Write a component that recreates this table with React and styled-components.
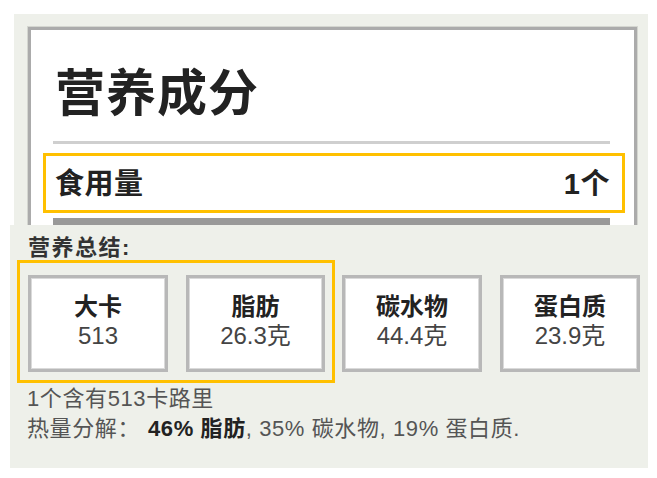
import React from 'react';
import styled, { createGlobalStyle } from 'styled-components';

const colors = {
  panel: '#eef0ea',
  ink: '#222',
  text: '#555',
  border: '#ababab',
  highlight: '#ffc000',
};

const font = `"Liberation Sans", "Noto Sans CJK SC", sans-serif`;

const Global = createGlobalStyle`
  html, body { margin: 0; padding: 0; background: #fff; }
  body { font-family: ${font}; }
`;

const Page = styled.div`
  width: 657px; height: 478px; box-sizing: border-box;
  padding-top: 14px;
  display: flex; flex-direction: column;
`;

const TopPanel = styled.section`
  margin-left: 14px; width: 634px; height: 211px; box-sizing: border-box;
  padding: 13px 11px 0 14px;
  background: ${colors.panel};
  overflow: hidden;
`;

const Label = styled.div`
  background: #fff;
  border: 3px solid ${colors.border};
  box-shadow: 0 0 0 1px #d4d6d0;
  height: 260px;
  padding: 35px 24px 0 22px;
`;

const Title = styled.h1`
  margin: 0 0 0 2px;
  font-size: 50px; line-height: 58px; font-weight: 700;
  color: ${colors.ink};
  letter-spacing: 1px;
`;

const Rule = styled.div`
  height: ${p => p.h || 2}px;
  background: ${p => p.color || '#cfcfcf'};
  margin-top: ${p => p.mt || 0}px;
`;

const Highlight = styled.div`
  border: 3px solid ${colors.highlight};
  box-sizing: border-box;
`;

const ServingRow = styled(Highlight)`
  margin: 9px -15px 0 -10px;
  height: 60px;
  padding: 0 12px 5px 9px;
  display: flex; align-items: center; justify-content: space-between;
  font-size: 29px; font-weight: 700; color: ${colors.ink};
  letter-spacing: 0.5px;
`;

const BottomPanel = styled.section`
  margin-left: 10px; width: 638px; height: 243px; box-sizing: border-box;
  padding: 11px 8px 0 18px;
  background: ${colors.panel};
`;

const Heading = styled.div`
  font-size: 22px; line-height: 24px; font-weight: 700; color: #333;
  letter-spacing: 1.5px;
`;

const CardRow = styled.div`
  display: flex; align-items: flex-start; gap: 7px;
  margin-left: -1px;
`;

const CardGroup = styled(Highlight)`
  display: flex; gap: 18px;
  padding: 12px 7px 8px 8px;
  margin-left: -10px;
`;

const Card = styled.div`
  width: ${p => p.w || 140}px; height: 97px; box-sizing: border-box;
  margin-top: ${p => p.mt || 0}px;
  margin-left: ${p => p.ml || 0}px;
  background: #fff;
  border: 3px solid #b8b8b8;
  box-shadow: inset 0 0 0 1px #dadada;
  display: flex; flex-direction: column; align-items: center;
  padding-top: 14px;
`;

const CardLabel = styled.div`
  font-size: 24px; line-height: 29px; font-weight: 700; color: ${colors.ink};
`;

const CardValue = styled.div`
  font-size: 24px; line-height: 30px; color: #444;
`;

const Note = styled.div`
  font-size: 22px; line-height: 30px; color: ${colors.text};
  letter-spacing: 0.6px;
  margin-top: ${p => p.mt || 0}px;
  margin-left: -1px;
`;

const Strong = styled.b`
  color: ${colors.ink}; margin-left: ${p => p.ml || 0}px;
`;

export default function App() {
  return (
    <>
      <Global />
      <Page>
        <TopPanel>
          <Label>
            <Title>营养成分</Title>
            <Rule mt={18} h={3} />
            <ServingRow>
              <span>食用量</span>
              <span>1个</span>
            </ServingRow>
            <Rule mt={5} h={10} color="#999" />
          </Label>
        </TopPanel>
        <BottomPanel>
          <Heading>营养总结:</Heading>
          <CardRow>
            <CardGroup>
              <Card>
                <CardLabel>大卡</CardLabel>
                <CardValue>513</CardValue>
              </Card>
              <Card w={139}>
                <CardLabel>脂肪</CardLabel>
                <CardValue>26.3克</CardValue>
              </Card>
            </CardGroup>
            <Card mt={15}>
              <CardLabel>碳水物</CardLabel>
              <CardValue>44.4克</CardValue>
            </Card>
            <Card mt={15} ml={11}>
              <CardLabel>蛋白质</CardLabel>
              <CardValue>23.9克</CardValue>
            </Card>
          </CardRow>
          <Note mt={1}>1个含有513卡路里</Note>
          <Note>热量分解：<Strong ml={8}>46% 脂肪</Strong>, 35% 碳水物, 19% 蛋白质.</Note>
        </BottomPanel>
      </Page>
    </>
  );
}
